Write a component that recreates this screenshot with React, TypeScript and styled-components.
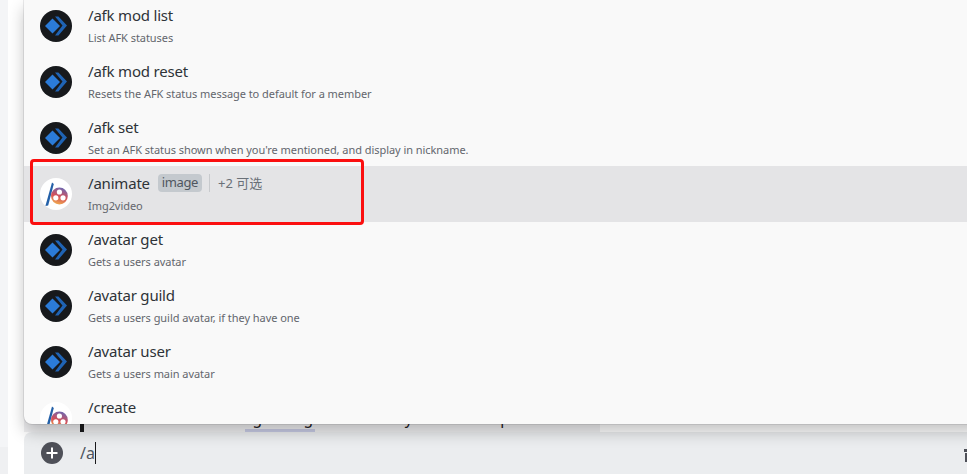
import React from 'react'
import styled, { createGlobalStyle } from 'styled-components'

const GlobalStyle = createGlobalStyle`
  html, body {
    margin: 0;
    padding: 0;
    width: 967px;
    height: 474px;
    overflow: hidden;
    background: #ffffff;
  }
  * {
    box-sizing: border-box;
  }
`

const Page = styled.div`
  display: flex;
  width: 967px;
  height: 474px;
  overflow: hidden;
  font-family: 'Noto Sans', 'Open Sans', 'Noto Sans CJK SC', sans-serif;
`

const Gutter = styled.div`
  flex: 0 0 8px;
  display: flex;
  flex-direction: column;
`

const GutterTop = styled.div`
  flex: 1;
  background: #f4f5f7;
`

const GutterBottom = styled.div`
  flex: 0 0 27px;
  background: #eff0f2;
`

const Chat = styled.main`
  position: relative;
  flex: 1;
  display: flex;
  flex-direction: column;
  padding: 0 0 0 16px;
  background: #ffffff;
  min-width: 0;
`

const Messages = styled.div`
  flex: 1;
  display: flex;
  flex-direction: column;
  justify-content: flex-end;
`

const Quote = styled.div`
  display: flex;
  height: 22px;
  width: 576px;
  padding-left: 56px;
  background: #f0f0f2;
  color: #1f2125;
  font-size: 15.5px;
  line-height: 18px;
  white-space: nowrap;
  overflow: hidden;
`

const QuoteBar = styled.div`
  flex: 0 0 4px;
  height: 22px;
  background: #1a1a1c;
`

const QuoteBody = styled.div`
  padding-left: 13px;
  margin-top: -1px;
`

const QuoteHighlight = styled.div`
  width: 70px;
  height: 3px;
  margin: 2px 0 0 148px;
  background: #c9cce6;
`

const InputBar = styled.div`
  flex: 0 0 42px;
  display: flex;
  align-items: center;
  width: 960px;
  height: 42px;
  padding-left: 17px;
  background: #ebedef;
  border-radius: 8px 0 0 0;
  overflow: hidden;
`

const PlusButton = styled.div`
  flex: 0 0 22px;
  width: 22px;
  height: 22px;
`

const InputText = styled.div`
  margin-left: 17px;
  font-size: 16px;
  line-height: 22px;
  color: #4f5660;
  border-right: 1px solid #1a1a1c;
`

const InputTools = styled.div`
  margin-left: auto;
  flex: 0 0 7px;
  width: 7px;
  height: 18px;
  margin-right: 13px;
`

const Popover = styled.section`
  position: absolute;
  left: 16px;
  top: 0;
  width: 960px;
  height: 424px;
  background: #f9f9f9;
  border-radius: 0 0 8px 8px;
  box-shadow: 0 0 0 1px rgba(6, 6, 7, 0.08), 0 8px 16px rgba(0, 0, 0, 0.24);
  overflow: hidden;
`

const CommandList = styled.ul`
  list-style: none;
  margin: -2px 0 0;
  padding: 0;
`

const Row = styled.li<{ $active?: boolean }>`
  display: flex;
  align-items: center;
  height: 56px;
  padding-left: 16px;
  background: ${({ $active }) => ($active ? '#e4e4e6' : 'transparent')};
`

const Avatar = styled.svg`
  flex: 0 0 32px;
  width: 32px;
  height: 32px;
  border-radius: 50%;
`

const RowBody = styled.div`
  margin-left: 16px;
  padding-bottom: 2px;
  display: flex;
  flex-direction: column;
  gap: 5px;
`

const TitleLine = styled.div`
  display: flex;
  align-items: center;
  height: 20px;
`

const Title = styled.span`
  font-size: 15px;
  line-height: 20px;
  letter-spacing: -0.2px;
  color: #2e3338;
`

const Param = styled.span`
  margin: 1px 0 0 8px;
  padding: 0 4px;
  height: 18px;
  font-size: 13px;
  line-height: 17px;
  letter-spacing: -0.4px;
  color: #4f5660;
  background: #c4c9ce;
  border-radius: 4px;
`

const Divider = styled.span`
  width: 1px;
  height: 18px;
  margin: 1px 8px 0 7px;
  background: #c8cacd;
`

const Optional = styled.span`
  font-size: 13px;
  line-height: 20px;
  color: #6a7078;
  font-family: 'Noto Sans', 'Noto Sans CJK SC', sans-serif;
`

const Description = styled.div`
  min-height: 16px;
  font-size: 11px;
  line-height: 16px;
  letter-spacing: -0.05px;
  color: #63666d;
  white-space: nowrap;
`

const Callout = styled.div`
  position: absolute;
  left: 22px;
  top: 159px;
  width: 334px;
  height: 66px;
  border: 3px solid #fb0f0f;
  border-radius: 4px;
  pointer-events: none;
`

const RobotAvatar = () => (
  <Avatar viewBox="0 0 32 32">
    <rect width="32" height="32" fill="#17191c" />
    <path d="M12.5 8.5 20 16l-7.5 7.5L5 16z" fill="#2b7bd8" />
    <path d="M15 6.5h3.4L27 15.5 18.4 25.5H15l7.5-10z" fill="#1f63b4" />
  </Avatar>
)

const ReelAvatar = () => (
  <Avatar viewBox="0 0 32 32">
    <defs>
      <linearGradient id="reel" x1="0.7" y1="0" x2="0.4" y2="1">
        <stop offset="0" stopColor="#6a68b4" />
        <stop offset="0.55" stopColor="#d65058" />
        <stop offset="1" stopColor="#f0aa50" />
      </linearGradient>
    </defs>
    <rect width="32" height="32" fill="#ffffff" />
    <path d="M12 4.5 13.8 6 8.2 27.5l-2.8.6z" fill="#2360a8" />
    <circle cx="19.4" cy="18" r="8.4" fill="url(#reel)" />
    <circle cx="19.4" cy="14" r="2.6" fill="#ffffff" />
    <circle cx="15.8" cy="19.8" r="2.6" fill="#ffffff" />
    <circle cx="23" cy="19.8" r="2.6" fill="#ffffff" />
  </Avatar>
)

type Command = {
  name: string
  description?: string
  avatar: 'robot' | 'reel'
  active?: boolean
  param?: string
  optional?: string
}

const COMMANDS: Command[] = [
  { name: '/afk mod list', description: 'List AFK statuses', avatar: 'robot' },
  { name: '/afk mod reset', description: 'Resets the AFK status message to default for a member', avatar: 'robot' },
  { name: '/afk set', description: "Set an AFK status shown when you're mentioned, and display in nickname.", avatar: 'robot' },
  { name: '/animate', description: 'Img2video', avatar: 'reel', active: true, param: 'image', optional: '+2 可选' },
  { name: '/avatar get', description: 'Gets a users avatar', avatar: 'robot' },
  { name: '/avatar guild', description: 'Gets a users guild avatar, if they have one', avatar: 'robot' },
  { name: '/avatar user', description: 'Gets a users main avatar', avatar: 'robot' },
  { name: '/create', avatar: 'reel' }
]

export default function App() {
  return (
    <Page>
      <GlobalStyle />
      <Gutter>
        <GutterTop />
        <GutterBottom />
      </Gutter>
      <Chat>
        <Messages>
          <Quote>
            <QuoteBar />
            <QuoteBody>
              wisdom ensure through the generation. style. Anime aspect ratio 16:
              <QuoteHighlight />
            </QuoteBody>
          </Quote>
        </Messages>
        <InputBar>
          <PlusButton>
            <svg width="22" height="22" viewBox="0 0 22 22">
              <circle cx="11" cy="11" r="11" fill="#4e5058" />
              <path d="M10 5.5h2V10h4.5v2H12v4.5h-2V12H5.5v-2H10z" fill="#ffffff" />
            </svg>
          </PlusButton>
          <InputText>/a</InputText>
          <InputTools>
            <svg width="7" height="18" viewBox="0 0 7 18">
              <path d="M3 0h4v5H3zM0 5h7v3H0zM1 9h6v9H1z" fill="#4e5058" />
            </svg>
          </InputTools>
        </InputBar>
        <Popover>
          <CommandList>
            {COMMANDS.map(command => (
              <Row key={command.name} $active={command.active}>
                {command.avatar === 'robot' ? <RobotAvatar /> : <ReelAvatar />}
                <RowBody>
                  <TitleLine>
                    <Title>{command.name}</Title>
                    {command.param && <Param>{command.param}</Param>}
                    {command.optional && <Divider />}
                    {command.optional && <Optional>{command.optional}</Optional>}
                  </TitleLine>
                  <Description>{command.description}</Description>
                </RowBody>
              </Row>
            ))}
          </CommandList>
        </Popover>
        <Callout />
      </Chat>
    </Page>
  )
}
